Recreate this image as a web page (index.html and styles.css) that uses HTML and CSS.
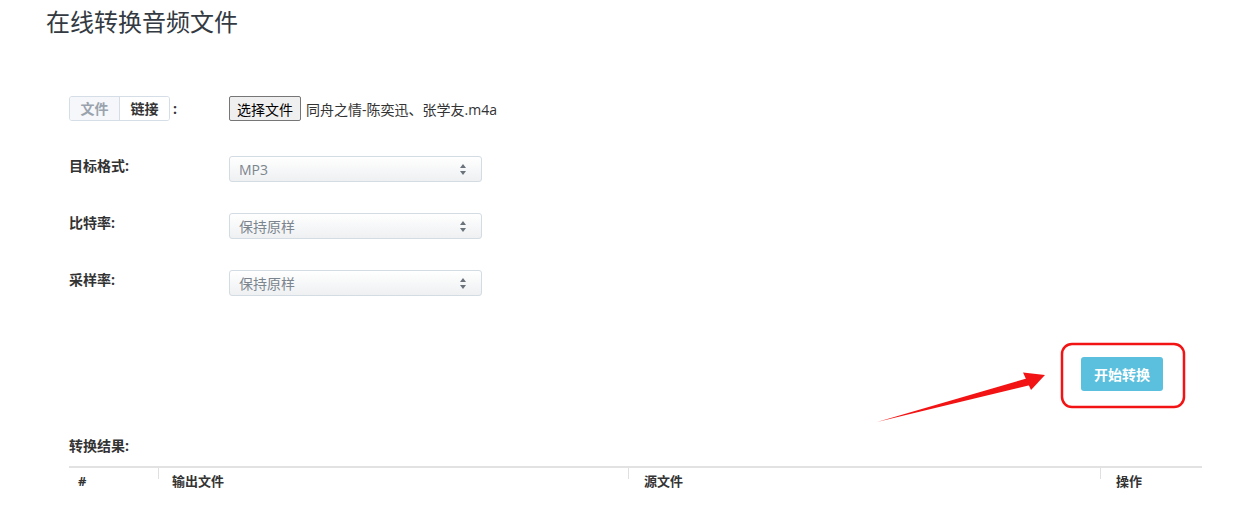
FILE: index.html
```html
<!DOCTYPE html>
<html lang="zh-CN">
<head>
  <meta charset="UTF-8" />
  <meta name="viewport" content="width=device-width, initial-scale=1.0" />
  <title>在线转换音频文件</title>
  <link rel="stylesheet" href="styles.css">
</head>
<body>

  <h2 class="title">在线转换音频文件</h2>

  <div class="main">
    <div class="row row-first">
      <div class="label">
        <span class="toggle">
          <span class="tab tab-active">文件</span><span class="tab">链接</span>
        </span>
        <span class="colon">:</span>
      </div>
      <div class="file">
        <button class="file-btn">选择文件</button>
        <span class="file-name">同舟之情-陈奕迅、张学友.m4a</span>
      </div>
    </div>

    <div class="row">
      <div class="label">目标格式:</div>
      <div class="select"><span>MP3</span><i class="arrows"></i></div>
    </div>

    <div class="row">
      <div class="label">比特率:</div>
      <div class="select"><span>保持原样</span><i class="arrows"></i></div>
    </div>

    <div class="row">
      <div class="label">采样率:</div>
      <div class="select"><span>保持原样</span><i class="arrows"></i></div>
    </div>

    <div class="actions">
      <button class="btn-start">开始转换</button>
    </div>

    <div class="result-label">转换结果:</div>

    <table class="result">
      <thead>
        <tr>
          <th class="c-num">#</th>
          <th class="c-out">输出文件</th>
          <th class="c-src">源文件</th>
          <th class="c-op">操作</th>
        </tr>
      </thead>
    </table>
  </div>

  <!-- annotation drawn over the screenshot -->
  <svg class="mark" width="1248" height="518" viewBox="0 0 1248 518">
    <rect x="1062" y="344" width="122" height="63" rx="10" ry="10" fill="none" stroke="#f21414" stroke-width="2.5"/>
    <polygon points="877,422 1030,377.5 1032.5,384.5" fill="#f21414"/>
    <polygon points="1023,372.5 1045,375 1031,390" fill="#f21414"/>
  </svg>

</body>
</html>
```

FILE: styles.css
```css
body {
  margin: 0;
  font-family: "Open Sans", "Noto Sans CJK SC", sans-serif;
  font-size: 14px;
  color: #333;
  background: #fff;
  position: relative;
  width: 1248px;
  height: 518px;
  overflow: hidden;
}
.title {
  margin: 0;
  padding: 5px 0 0 46px;
  font-size: 24px;
  line-height: 34px;
  font-weight: normal;
  color: #333a42;
}
.main {
  margin: 57px 46px 0 69px;
}
.row {
  display: flex;
  align-items: flex-start;
  height: 26px;
  margin-bottom: 31px;
}
.row-first {
  height: 25px;
  margin-bottom: 35px;
  align-items: center;
}
.label {
  width: 160px;
  flex-shrink: 0;
  font-weight: bold;
  line-height: 20px;
  display: flex;
  align-items: center;
}
.toggle {
  display: inline-flex;
  border: 1px solid #d5dde6;
  border-radius: 3px;
  overflow: hidden;
  height: 23px;
}
.tab {
  width: 49px;
  display: flex;
  align-items: center;
  justify-content: center;
  background: #fff;
  color: #333;
}
.tab-active {
  background: #f5f7fa;
  color: #9aa3ad;
  border-right: 1px solid #d5dde6;
}
.colon {
  margin-left: 3px;
}
.file {
  display: flex;
  align-items: center;
}
.file-btn {
  font-family: inherit;
  font-size: 14px;
  height: 25px;
  width: 72px;
  padding: 0;
  background: #efefef;
  border: 1px solid #767676;
  border-radius: 2px;
  color: #000;
}
.file-name {
  margin-left: 5px;
  color: #333;
}
.select {
  width: 253px;
  height: 26px;
  box-sizing: border-box;
  border: 1px solid #d3dbe3;
  border-radius: 3px;
  background: linear-gradient(#fff, #eef0f2);
  display: flex;
  align-items: center;
  justify-content: space-between;
  padding: 0 14px 0 9px;
  color: #7c858e;
}
.arrows {
  position: relative;
  width: 7px;
  height: 11px;
}
.arrows::before,
.arrows::after {
  content: "";
  position: absolute;
  left: 0;
  border-left: 3.5px solid transparent;
  border-right: 3.5px solid transparent;
}
.arrows::before {
  top: 0;
  border-bottom: 4px solid #6a737c;
}
.arrows::after {
  bottom: 0;
  border-top: 4px solid #6a737c;
}
.actions {
  display: flex;
  justify-content: flex-end;
  margin-top: 61px;
  padding-right: 39px;
}
.btn-start {
  font-family: inherit;
  font-size: 14px;
  font-weight: bold;
  color: #fff;
  background: #5bc0de;
  border: none;
  border-radius: 3px;
  width: 82px;
  height: 34px;
  padding: 0;
}
.result-label {
  margin-top: 45px;
  font-weight: bold;
  line-height: 20px;
}
.result {
  margin-top: 10px;
  width: 100%;
  border-collapse: collapse;
  border-top: 2px solid #e2e2e2;
  font-size: 13px;
}
.result th {
  position: relative;
  text-align: left;
  padding: 5px 16px;
  line-height: 16px;
  font-weight: bold;
}
.result th + th::before {
  content: "";
  position: absolute;
  left: 0;
  top: 0;
  width: 1px;
  height: 11px;
  background: #e0e0e0;
}
.result .c-num {
  width: 80px;
  padding-left: 9px;
  padding-right: 0;
}
.result .c-out {
  width: 440px;
  padding-left: 14px;
}
.result .c-src {
  width: 440px;
}
.mark {
  position: absolute;
  left: 0;
  top: 0;
  pointer-events: none;
}
```
